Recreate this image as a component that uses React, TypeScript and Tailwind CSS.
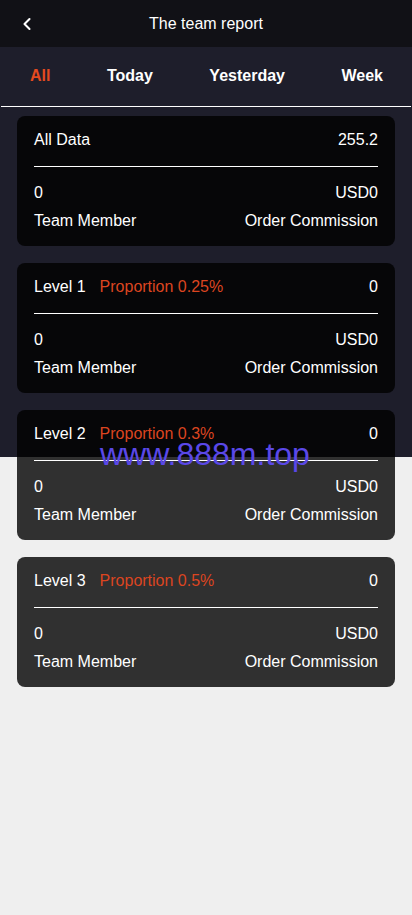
import { ChevronLeft } from "lucide-react";

const tabs = ["All", "Today", "Yesterday", "Week"];

const levels = [
    { name: "Level 1", proportion: "Proportion 0.25%", value: "0" },
    { name: "Level 2", proportion: "Proportion 0.3%", value: "0" },
    { name: "Level 3", proportion: "Proportion 0.5%", value: "0" },
];

function ReportCard({ title, proportion, value }: { title: string; proportion?: string; value: string }) {
    return (
        <div className="rounded-lg bg-black/80 px-[17px] pt-[14px] pb-[15px] text-white">
            <div className="flex items-center justify-between leading-5">
                <div className="flex items-center gap-[14px]">
                    <span>{title}</span>
                    {proportion && <span className="text-[#dc4520]">{proportion}</span>}
                </div>
                <span>{value}</span>
            </div>
            <div className="mt-[16px] mb-[16px] h-px bg-white" />
            <div className="flex justify-between leading-5">
                <span>0</span>
                <span>USD0</span>
            </div>
            <div className="mt-2 flex justify-between leading-5">
                <span>Team Member</span>
                <span>Order Commission</span>
            </div>
        </div>
    );
}

export default function App() {
    return (
        <div className="relative min-h-[915px] bg-[linear-gradient(#1e1e2b_0_457px,#efefef_457px)] font-['Liberation_Sans',Arial,sans-serif] text-base">
            <header className="relative flex h-[47px] items-center justify-center bg-[#111116] text-white">
                <ChevronLeft className="absolute left-[17px] top-[14px] h-5 w-5" strokeWidth={2.5} />
                <h1 className="leading-5">The team report</h1>
            </header>

            <nav className="flex h-[59px] items-center justify-between pl-[30px] pr-[29px] pb-[2px] font-bold text-white">
                {tabs.map(tab => (
                    <span key={tab} className={tab === "All" ? "text-[#e44a1f]" : ""}>
                        {tab}
                    </span>
                ))}
            </nav>
            <div className="mx-px h-px bg-white" />

            <main className="flex flex-col gap-[17px] px-[17px] pt-[9px]">
                <ReportCard title="All Data" value="255.2" />
                {levels.map(level => (
                    <ReportCard key={level.name} title={level.name} proportion={level.proportion} value={level.value} />
                ))}
            </main>

            <div className="pointer-events-none absolute left-[100px] top-[436px] text-[32px] leading-9 text-[#5a48e8]">
                www.888m.top
            </div>
        </div>
    );
}
